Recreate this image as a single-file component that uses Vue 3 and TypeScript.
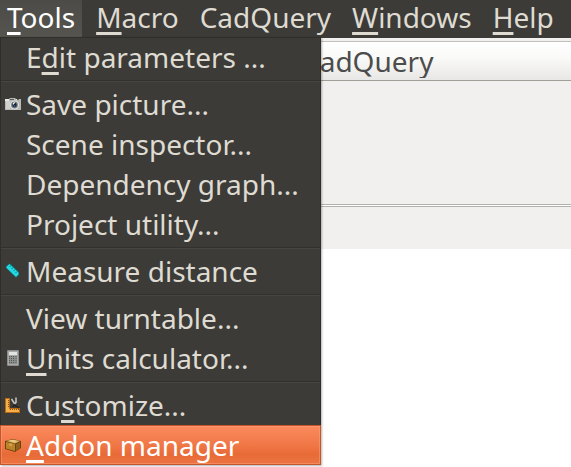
<script setup lang="ts">
import { ref } from 'vue'

interface Label {
  before?: string
  key?: string
  after: string
}
interface Entry extends Label {
  icon?: 'camera' | 'ruler' | 'calculator' | 'square' | 'box'
  active?: boolean
}

const menus: Label[] = [
  { key: 'T', after: 'ools' },
  { key: 'M', after: 'acro' },
  { after: 'CadQuery' },
  { key: 'W', after: 'indows' },
  { key: 'H', after: 'elp' },
]

const groups: Entry[][] = [
  [{ before: 'E', key: 'd', after: 'it parameters ...' }],
  [
    { after: 'Save picture...', icon: 'camera' },
    { after: 'Scene inspector...' },
    { after: 'Dependency graph...' },
    { after: 'Project utility...' },
  ],
  [{ after: 'Measure distance', icon: 'ruler' }],
  [
    { after: 'View turntable...' },
    { key: 'U', after: 'nits calculator...', icon: 'calculator' },
  ],
  [
    { before: 'Cu', key: 's', after: 'tomize...', icon: 'square' },
    { key: 'A', after: 'ddon manager', icon: 'box', active: true },
  ],
]

const workbench = ref('CadQuery')
</script>

<template>
  <div class="window">
    <nav class="menubar">
      <button
        v-for="(m, i) in menus"
        :key="m.after"
        type="button"
        class="menu-title"
        :class="{ open: i === 0 }"
      ><span v-if="m.key" class="key">{{ m.key }}</span>{{ m.after }}</button>
    </nav>

    <div class="body">
      <div class="toolbar">
        <select v-model="workbench" class="workbench" aria-label="Workbench">
          <option>CadQuery</option>
        </select>
      </div>
      <div class="toolbar-space"></div>
      <div class="toolbar-lower"></div>

      <div class="menu" role="menu">
        <div v-for="(group, g) in groups" :key="g" class="group">
          <button
            v-for="item in group"
            :key="item.after"
            type="button"
            role="menuitem"
            class="item"
            :class="{ active: item.active }"
          >
            <span class="icon">
              <svg v-if="item.icon === 'camera'" viewBox="0 0 16 16" width="16" height="16" aria-hidden="true">
                <path d="M0 3h4l1-1h5l1 1h5v11H0z" fill="#b9bab7" />
                <path d="M0 3h4v2H0zM11 3h3v1h-3z" fill="#e8e8e5" />
                <path d="M1 5h4v8H1z" fill="#d0d0cd" />
                <path d="M12 3h2v1h-2zM5 3h4v1H5z" fill="#565854" />
                <circle cx="9.500" cy="9" r="4.500" fill="#e4e5e2" />
                <circle cx="9.500" cy="9" r="3.400" fill="#777d80" />
                <circle cx="9.500" cy="9" r="2.200" fill="#172330" />
                <circle cx="9.500" cy="10" r="1" fill="#315f9c" />
                <path d="M8 7l2-1v1L8 9z" fill="#f2f4f3" />
              </svg>
              <svg v-else-if="item.icon === 'ruler'" viewBox="0 0 16 16" width="16" height="16" aria-hidden="true">
                <path d="M5 0L14 9v3l-3 3L1 5V3z" fill="#155d62" />
                <path d="M4.500 1L13.500 9.500v2L11 14 1.500 5V3.500z" fill="#22d9e2" />
                <path d="M6 2.500L4.500 4M8 4.500L6.500 6M10 6.500L8.500 8M12 8.500L10.500 10" stroke="#0a7c83" stroke-width="1" />
              </svg>
              <svg v-else-if="item.icon === 'calculator'" viewBox="0 0 16 16" width="16" height="16" aria-hidden="true">
                <rect x="2" width="12" height="16" rx="1" fill="#8c8c8c" />
                <path d="M3 1h10v14H3z" fill="#a8a8a8" />
                <path d="M4 2h8v3H4z" fill="#e3e3df" />
                <path d="M4 6h8v8H4z" fill="#8b8e8b" />
                <path d="M4.500 6v8M6.500 6v8M8.500 6v8M11 6v8" stroke="#565a58" stroke-width="1" stroke-dasharray="1 1" />
              </svg>
              <svg v-else-if="item.icon === 'square'" viewBox="0 0 16 16" width="16" height="16" aria-hidden="true">
                <path d="M0 1h5v10h10v5H0z" fill="#b86a12" />
                <path d="M1 2h3v10h10v3H1z" fill="#f4b04c" />
                <path d="M3.500 3v8" stroke="#87500f" stroke-width="1" stroke-dasharray="1 1" />
                <path d="M5 12.500h9" stroke="#87500f" stroke-width="1" stroke-dasharray="1 1" />
                <path d="M6.500 2l3 4.500M11 0.500v5L9.500 7" fill="none" stroke="#c7cac5" stroke-width="1.500" />
                <path d="M9 8l2 1 3 2M9 8l-1 2" fill="none" stroke="#242522" stroke-width="1.500" />
              </svg>
              <svg v-else-if="item.icon === 'box'" viewBox="0 0 16 16" width="16" height="16" aria-hidden="true">
                <path d="M0 4l8-2 8 2v7l-6 4L0 12z" fill="#6b430c" />
                <path d="M1 4l7-1.500L15 4l-5 2.500z" fill="#e0b467" />
                <path d="M1 5l9 2v7l-9-2.500z" fill="#bd832b" />
                <path d="M11 7l4-2v6l-4 3z" fill="#91601a" />
                <path d="M4 3.500l6 1.500 1-1-4-1z" fill="#f1d394" />
                <path d="M4 6l3 .7v2.500L4 8.500z" fill="#d5a14c" />
              </svg>
            </span>
            <span class="text">{{ item.before }}<span v-if="item.key" class="key">{{ item.key }}</span>{{ item.after }}</span>
          </button>
        </div>
      </div>
    </div>
  </div>
</template>

<style>
body {
  margin: 0;
  background: #fff;
}
</style>

<style scoped>
.window {
  min-height: 100vh;
  background: #fff;
  font-family: "Noto Sans", "Open Sans", sans-serif;
  font-size: 28px;
}
button,
select {
  margin: 0;
  border: 0;
  font: inherit;
  white-space: nowrap;
}
.menubar {
  display: flex;
  height: 38px;
  box-sizing: border-box;
  gap: 7px;
  background: #3c3b37;
}
.menu-title {
  height: 37px;
  padding: 0 7px 3px;
  background: none;
  color: #dfdbd2;
  line-height: 34px;
}
.menu-title.open {
  background: linear-gradient(#4c4b47, #55544f);
  color: #fff;
}
.key {
  text-decoration: underline;
  text-decoration-thickness: 3px;
  text-underline-offset: 4px;
  text-decoration-skip-ink: none;
}
.body {
  position: relative;
}
.toolbar {
  padding-top: 3px;
  background: #f1f0ee;
}
.workbench {
  display: block;
  width: 100%;
  height: 40px;
  padding: 0 0 2px 302px;
  appearance: none;
  border-top: 1px solid #c3c1bd;
  border-bottom: 1px solid #a19e98;
  border-radius: 0;
  background: linear-gradient(#fff, #fafaf9 40%, #e8e7e5);
  color: #4c4c4c;
}
.toolbar-space {
  height: 123px;
  background: #f1f0ee;
  border-bottom: 1px solid #b3b1ad;
}
.toolbar-lower {
  height: 42px;
  margin-top: 1px;
  background: #f1f0ee;
  border-top: 1px solid #b3b1ad;
}
.menu {
  position: absolute;
  top: -1px;
  left: 0;
  width: 321px;
  box-sizing: border-box;
  border: solid #2f2e2b;
  border-width: 0 1px;
  background: #3c3b37;
  box-shadow: inset 0 1px #2f2e2b, 1px 1px 2px rgba(0, 0, 0, 0.3);
}
.group + .group {
  margin-top: 3px;
  padding-top: 3px;
  border-top: 1px solid #32312e;
  box-shadow: inset 0 1px #474641;
}
.item {
  display: flex;
  align-items: center;
  width: 100%;
  height: 40px;
  padding: 0 0 0 4px;
  gap: 5px;
  background: none;
  color: #dfdbd2;
  line-height: 40px;
  text-align: left;
}
.item.active {
  width: calc(100% + 2px);
  margin: 0 -1px;
  border: 1px solid #c4562e;
  background: linear-gradient(#fb8a5e, #f07746 50%, #e76b37 75%, #ec7442);
  box-shadow: inset 0 0 0 1px rgba(255, 160, 120, 0.5);
  color: #fff;
  line-height: 38px;
}
.icon {
  flex: none;
  width: 16px;
  height: 16px;
}
.icon svg {
  display: block;
}
</style>
